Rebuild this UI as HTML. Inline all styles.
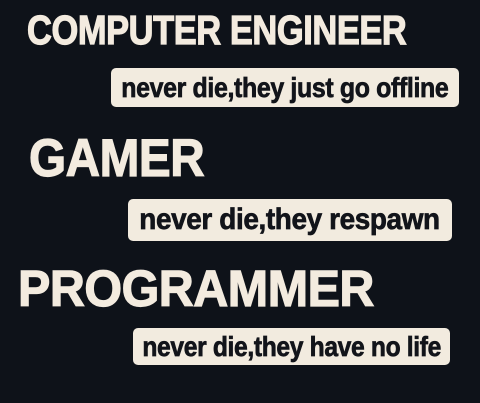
<!DOCTYPE html>
<html><head><style>
html,body{margin:0;padding:0}
body{width:480px;height:403px;background:#0e1219;position:relative;overflow:hidden;font-family:"Liberation Sans",sans-serif;font-weight:bold}
.h{position:absolute;color:#f3ebdf;line-height:1;white-space:nowrap;transform-origin:left top;letter-spacing:-0.5px;-webkit-text-stroke:1.2px #f3ebdf}
.b{position:absolute;background:#f2ebdf;border-radius:5px;display:flex;align-items:center;justify-content:center;overflow:visible}
.b span{display:inline-block;color:#12141a;white-space:nowrap;line-height:1;letter-spacing:-0.4px;-webkit-text-stroke:0.7px #12141a}
</style></head><body>
<div class="h" style="left:27px;top:10px;font-size:41px;transform:scaleX(0.84)">COMPUTER ENGINEER</div>
<div class="b" style="left:111px;top:68px;width:348px;height:39px"><span style="font-size:28px;transform:scaleX(0.89)">never die,they just go offline</span></div>
<div class="h" style="left:29px;top:132px;font-size:53px;transform:scaleX(0.9)">GAMER</div>
<div class="b" style="left:128px;top:199px;width:324px;height:42px"><span style="font-size:30px;transform:scaleX(0.93)">never die,they respawn</span></div>
<div class="h" style="left:18px;top:263px;font-size:51px;transform:scaleX(0.95)">PROGRAMMER</div>
<div class="b" style="left:133px;top:328px;width:317px;height:37px"><span style="font-size:28px;transform:scaleX(0.88)">never die,they have no life</span></div>
</body></html>
